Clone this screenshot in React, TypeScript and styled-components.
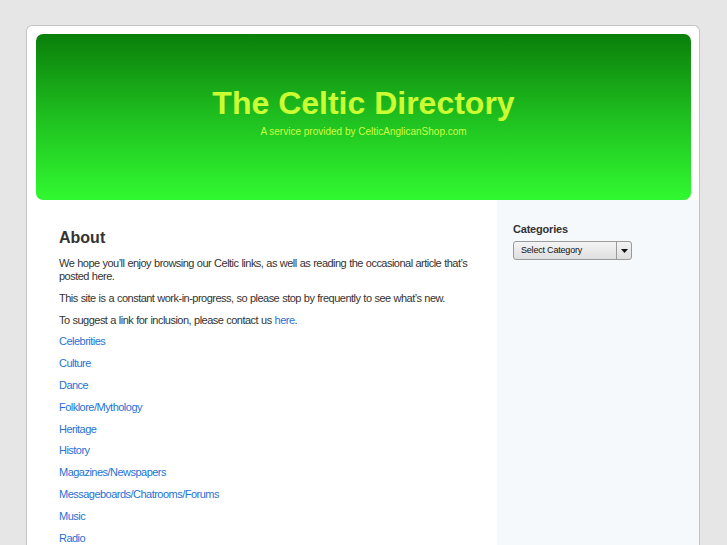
import React from "react";
import styled, { createGlobalStyle } from "styled-components";

const GlobalStyle = createGlobalStyle`
  body {
    margin: 0;
    background: #e6e6e6;
    font-family: "Liberation Sans", Arial, sans-serif;
    color: #333;
  }
`;

const links = [
    "Celebrities",
    "Culture",
    "Dance",
    "Folklore/Mythology",
    "Heritage",
    "History",
    "Magazines/Newspapers",
    "Messageboards/Chatrooms/Forums",
    "Music",
    "Radio",
];

const App = () => {
    return (
        <>
            <GlobalStyle />
            <Page>
                <Header>
                    <Title>The Celtic Directory</Title>
                    <Tagline>A service provided by CelticAnglicanShop.com</Tagline>
                </Header>

                <Columns>
                    <Main>
                        <Heading>About</Heading>
                        <Para>
                            We hope you’ll enjoy browsing our Celtic links, as well as reading the occasional article that’s posted here.
                        </Para>
                        <Para>
                            This site is a constant work-in-progress, so please stop by frequently to see what’s new.
                        </Para>
                        <Para>
                            To suggest a link for inclusion, please contact us <Link href="#">here</Link>.
                        </Para>
                        <LinkList>
                            {links.map((l) => (
                                <LinkItem key={l}>
                                    <Link href="#">{l}</Link>
                                </LinkItem>
                            ))}
                        </LinkList>
                    </Main>

                    <Sidebar>
                        <SideTitle>Categories</SideTitle>
                        <Select>
                            <SelectLabel>Select Category</SelectLabel>
                            <SelectArrow>
                                <svg width="7" height="4" viewBox="0 0 7 4">
                                    <path d="M0 0 H7 L3.5 4 Z" fill="#111" />
                                </svg>
                            </SelectArrow>
                        </Select>
                    </Sidebar>
                </Columns>
            </Page>
        </>
    );
};

const Page = styled.div`
    margin: 25px 0 0 26px;
    width: 672px;
    border: 1px solid #c4c4c4;
    border-bottom: none;
    border-radius: 6px 6px 0 0;
    background: #fff;
    padding-top: 8px;
`;

const Header = styled.div`
    margin: 0 8px 0 9px;
    height: 166px;
    border-radius: 7px;
    background: linear-gradient(to bottom, #0a7f0a 0%, #1fbf1f 50%, #31f931 100%);
    display: flex;
    flex-direction: column;
    align-items: center;
    padding-top: 50px;
    box-sizing: border-box;
`;

const Title = styled.h1`
    margin: 0;
    font-size: 32px;
    line-height: 38px;
    font-weight: bold;
    color: #ccff33;
`;

const Tagline = styled.div`
    margin-top: 4px;
    font-size: 10px;
    line-height: 12px;
    color: #ccff44;
`;

const Columns = styled.div`
    display: flex;
`;

const Main = styled.div`
    width: 470px;
    padding: 28px 24px 0 32px;
    box-sizing: border-box;
`;

const Heading = styled.h2`
    margin: 0 0 9px;
    font-size: 16px;
    line-height: 20px;
    font-weight: bold;
    color: #333;
`;

const Para = styled.p`
    margin: 0 0 9px;
    font-size: 11px;
    line-height: 13px;
    letter-spacing: -0.52px;
    word-spacing: 0.4px;
`;

const LinkList = styled.ul`
    list-style: none;
    margin: -1px 0 0;
    padding: 0;
`;

const LinkItem = styled.li`
    font-size: 11px;
    line-height: 13px;
    letter-spacing: -0.52px;
    margin-bottom: 8.9px;
`;

const Link = styled.a`
    color: #1f72d6;
    text-decoration: none;
`;

const Sidebar = styled.div`
    flex: 1;
    background: #f5f9fc;
    padding: 23px 16px 0 16px;
    min-height: 400px;
`;

const SideTitle = styled.h3`
    margin: 0 0 5px;
    font-size: 11px;
    line-height: 13px;
    font-weight: bold;
    letter-spacing: -0.2px;
    color: #333;
`;

const Select = styled.div`
    display: flex;
    width: 119px;
    height: 19px;
    box-sizing: border-box;
    border: 1px solid #9a9a9a;
    border-radius: 3px;
    background: linear-gradient(to bottom, #f4f4f4, #dedede);
`;

const SelectLabel = styled.div`
    flex: 1;
    font-size: 9px;
    line-height: 17px;
    padding-left: 7px;
    letter-spacing: -0.2px;
    color: #111;
`;

const SelectArrow = styled.div`
    width: 14px;
    border-left: 1px solid #9a9a9a;
    display: flex;
    align-items: center;
    justify-content: center;
`;

export default App;
